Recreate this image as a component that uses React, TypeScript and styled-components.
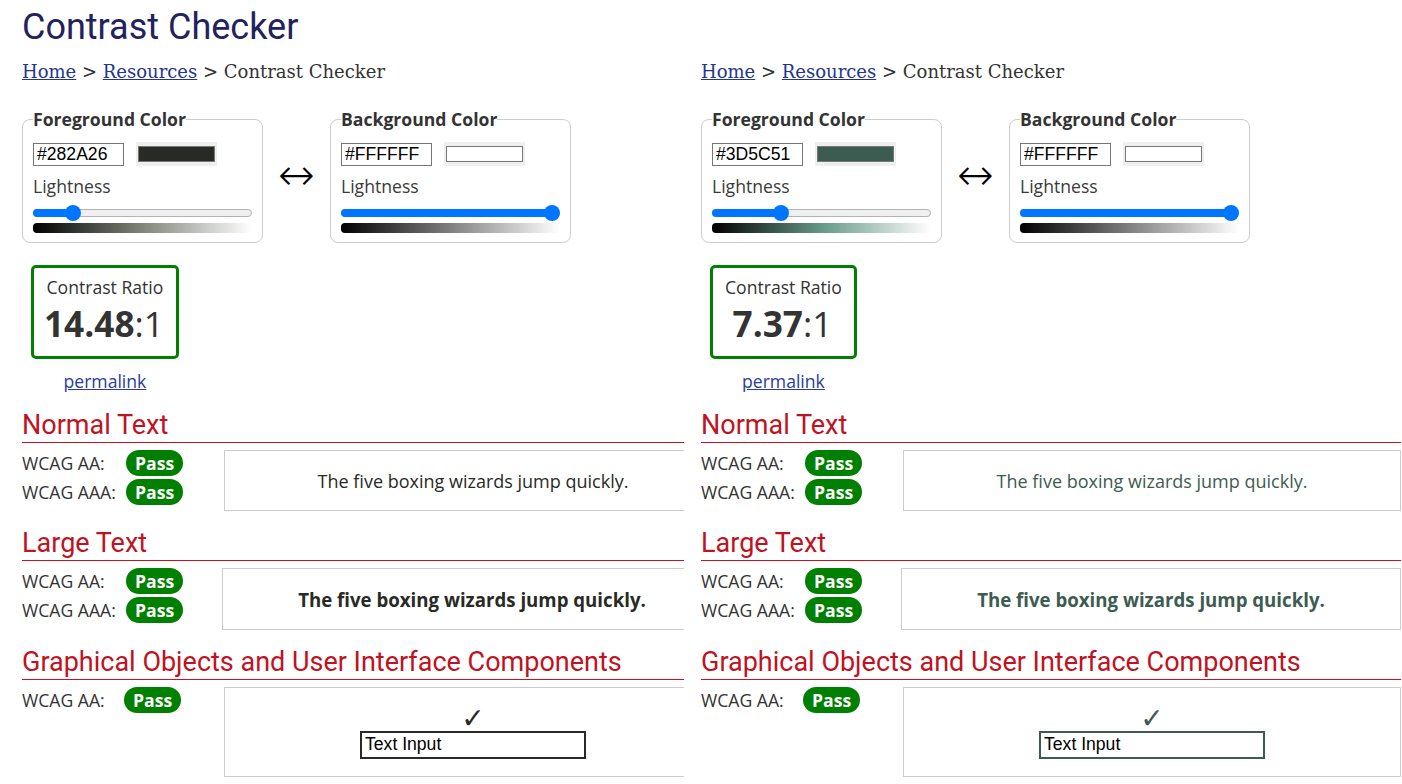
import React from "react";
import styled, { createGlobalStyle } from "styled-components";

const GlobalStyle = createGlobalStyle`
  html, body { margin: 0; padding: 0; background: #fff; }
  body {
    font-family: "Open Sans", "Noto Sans", sans-serif;
    font-size: 17.6px;
    color: #333;
  }
  * { box-sizing: border-box; }
`;

const Page = styled.div`
  display: flex;
  width: 1402px;
  height: 784px;
  overflow: hidden;
`;

const Panel = styled.section<{ $width?: number; $pad: number }>`
  flex: ${(p) => (p.$width ? `0 0 ${p.$width}px` : "1 1 auto")};
  overflow: hidden;
  padding-left: ${(p) => p.$pad}px;
`;

const Content = styled.div`
  width: 700px;
`;

const Title = styled.h1`
  margin: 7px 0 0;
  font-family: Roboto, "Noto Sans", sans-serif;
  font-weight: 400;
  font-size: 36px;
  line-height: 40px;
  color: #22225e;
`;

const TitleSpacer = styled.div`
  height: 47px;
`;

const Crumbs = styled.nav`
  margin-top: 13px;
  font-family: "DejaVu Serif", "Liberation Serif", serif;
  font-size: 18px;
  line-height: 24px;
  color: #333;
`;

const CrumbLink = styled.a`
  color: #24358f;
  text-decoration: underline;
`;

const ColorsRow = styled.div`
  display: flex;
  align-items: center;
  margin-top: 23px;
`;

const Fieldset = styled.fieldset`
  margin: 0;
  min-width: 0;
  width: 241px;
  border: 1px solid #ccc;
  border-radius: 8px;
  padding: 11px 10px 9px;
`;

const Legend = styled.legend`
  padding: 0;
  font-weight: 700;
  font-size: 17.6px;
  line-height: 24px;
  color: #333;
`;

const InputRow = styled.div`
  display: flex;
  align-items: center;
  gap: 12px;
`;

const HexInput = styled.input`
  width: 91px;
  height: 23px;
  margin: 0;
  border: 1px solid #767676;
  border-radius: 0;
  padding: 1px 3px;
  font-family: "Liberation Sans", Arial, sans-serif;
  font-size: 17.6px;
  color: #000;
  background: #fff;
`;

const Swatch = styled.span`
  display: flex;
  width: 81px;
  height: 24px;
  padding: 4px 2px;
  background: #efefef;
`;

const SwatchColor = styled.span<{ $color: string }>`
  flex: 1;
  border: 1px solid #777;
  background: ${(p) => p.$color};
`;

const FieldLabel = styled.div`
  margin-top: 8px;
  line-height: 24px;
  font-weight: 400;
  color: #3a3a3a;
`;

const Slider = styled.div`
  position: relative;
  display: flex;
  align-items: center;
  height: 16px;
  margin-top: 7px;
`;

const Track = styled.div`
  position: relative;
  width: 100%;
  height: 8px;
  border: 1px solid #b3b3b3;
  border-radius: 4px;
  background: #efefef;
`;

const Fill = styled.div`
  position: absolute;
  left: -1px;
  top: -1px;
  height: 8px;
  border-radius: 4px;
  background: #0075ff;
`;

const Thumb = styled.div`
  position: absolute;
  top: 0;
  width: 16px;
  height: 16px;
  border-radius: 50%;
  background: #0075ff;
`;

const GradientBar = styled.div<{ $mid: string }>`
  height: 10px;
  margin-top: 2px;
  border-radius: 4px 0 0 4px;
  background: linear-gradient(to right, #000, ${(p) => p.$mid}, #fff);
`;

const SwapArrow = styled.div`
  width: 67px;
  text-align: center;
  font-family: "DejaVu Sans ExtraLight", "DejaVu Sans", sans-serif;
  font-weight: 200;
  font-size: 44px;
  line-height: 34px;
  color: #000;
`;

const RatioWrap = styled.div`
  display: flex;
  flex-direction: column;
  align-items: center;
  width: max-content;
  margin: 22px 0 0 9px;
`;

const RatioBox = styled.div`
  border: 3px solid #008000;
  border-radius: 5px;
  padding: 7px 12px 9px;
  text-align: center;
`;

const RatioLabel = styled.div`
  line-height: 24px;
  color: #333;
`;

const RatioValue = styled.div`
  font-size: 35.2px;
  line-height: 48px;
  color: #333;
  margin-left: -2px;
  strong { font-weight: 700; }
`;

const Permalink = styled.a`
  margin-top: 10px;
  line-height: 24px;
  color: #2a3c9c;
  text-decoration: underline;
`;

const Section = styled.div`
  margin-top: 17px;
`;

const SectionHeading = styled.h2`
  margin: 0;
  padding-bottom: 1px;
  border-bottom: 1px solid #c8101e;
  font-family: Roboto, "Noto Sans", sans-serif;
  font-weight: 400;
  font-size: 27px;
  line-height: 31px;
  color: #c1121f;
`;

const SectionBody = styled.div`
  display: flex;
  align-items: flex-start;
  margin-top: 7px;
`;

const Results = styled.div<{ $width: number }>`
  flex: 0 0 ${(p) => p.$width}px;
  display: flex;
  flex-direction: column;
  gap: 3px;
`;

const ResultRow = styled.div`
  display: flex;
  align-items: center;
  height: 26px;
`;

const ResultLabel = styled.span<{ $width: number }>`
  width: ${(p) => p.$width}px;
  line-height: 26px;
  color: #333;
`;

const Badge = styled.span`
  display: inline-block;
  height: 26px;
  line-height: 26px;
  padding: 0 9px;
  border-radius: 13px;
  background: #008000;
  color: #fff;
  font-weight: 700;
`;

const SampleBox = styled.div<{ $color: string; $large?: boolean }>`
  flex: 1;
  border: 1px solid #ccc;
  padding: 17.5px 8px;
  text-align: center;
  color: ${(p) => p.$color};
  font-size: ${(p) => (p.$large ? "18.66px" : "18px")};
  font-weight: ${(p) => (p.$large ? 700 : 400)};
  line-height: ${(p) => (p.$large ? "25.4px" : "24px")};
`;

const Check = styled.div<{ $color: string }>`
  font-family: "DejaVu Sans", sans-serif;
  font-size: 28px;
  line-height: 25px;
  color: ${(p) => p.$color};
`;

const DemoInput = styled.input<{ $color: string }>`
  display: block;
  width: 226px;
  height: 28px;
  margin: 0 auto;
  padding: 0 3px;
  border: 2px solid ${(p) => p.$color};
  border-radius: 0;
  font-family: "Liberation Sans", Arial, sans-serif;
  font-size: 17.6px;
  color: #000;
  background: #fff;
`;

type Swatch = { legend: string; hex: string; lightness: number; mid: string };

type PanelData = {
  showTitle: boolean;
  pad: number;
  width?: number;
  fg: Swatch;
  bg: Swatch;
  ratio: string;
};

const TRACK_W = 219;

const ColorField: React.FC<{ s: Swatch }> = ({ s }) => {
  const thumbLeft = (TRACK_W - 16) * s.lightness;
  return (
    <Fieldset>
      <Legend>{s.legend}</Legend>
      <InputRow>
        <HexInput readOnly value={s.hex} />
        <Swatch>
          <SwatchColor $color={s.hex} />
        </Swatch>
      </InputRow>
      <FieldLabel>Lightness</FieldLabel>
      <Slider>
        <Track>
          <Fill style={{ width: thumbLeft + 8 }} />
        </Track>
        <Thumb style={{ left: thumbLeft }} />
      </Slider>
      <GradientBar $mid={s.mid} />
    </Fieldset>
  );
};

const Result: React.FC<{ label: string; labelWidth: number }> = ({ label, labelWidth }) => (
  <ResultRow>
    <ResultLabel $width={labelWidth}>{label}</ResultLabel>
    <Badge>Pass</Badge>
  </ResultRow>
);

const CheckerPanel: React.FC<{ d: PanelData }> = ({ d }) => {
  const fg = d.fg.hex;
  return (
    <Panel $pad={d.pad} $width={d.width}>
      <Content>
        {d.showTitle ? <Title>Contrast Checker</Title> : <TitleSpacer />}
        <Crumbs>
          <CrumbLink href="#">Home</CrumbLink> &gt; <CrumbLink href="#">Resources</CrumbLink> &gt; Contrast Checker
        </Crumbs>
        <ColorsRow>
          <ColorField s={d.fg} />
          <SwapArrow>↔</SwapArrow>
          <ColorField s={d.bg} />
        </ColorsRow>
        <RatioWrap>
          <RatioBox>
            <RatioLabel>Contrast Ratio</RatioLabel>
            <RatioValue>
              <strong>{d.ratio}</strong>:1
            </RatioValue>
          </RatioBox>
          <Permalink href="#">permalink</Permalink>
        </RatioWrap>

        <Section>
          <SectionHeading>Normal Text</SectionHeading>
          <SectionBody>
            <Results $width={202}>
              <Result label="WCAG AA:" labelWidth={104} />
              <Result label="WCAG AAA:" labelWidth={104} />
            </Results>
            <SampleBox $color={fg}>The five boxing wizards jump quickly.</SampleBox>
          </SectionBody>
        </Section>

        <Section>
          <SectionHeading>Large Text</SectionHeading>
          <SectionBody>
            <Results $width={200}>
              <Result label="WCAG AA:" labelWidth={104} />
              <Result label="WCAG AAA:" labelWidth={104} />
            </Results>
            <SampleBox $color={fg} $large>
              The five boxing wizards jump quickly.
            </SampleBox>
          </SectionBody>
        </Section>

        <Section>
          <SectionHeading>Graphical Objects and User Interface Components</SectionHeading>
          <SectionBody>
            <Results $width={202}>
              <Result label="WCAG AA:" labelWidth={102} />
            </Results>
            <SampleBox $color={fg}>
              <Check $color={fg}>✓</Check>
              <DemoInput $color={fg} readOnly value="Text Input" />
            </SampleBox>
          </SectionBody>
        </Section>
      </Content>
    </Panel>
  );
};

const white: Swatch = { legend: "Background Color", hex: "#FFFFFF", lightness: 1, mid: "hsl(0, 0%, 50%)" };

const panels: PanelData[] = [
  {
    showTitle: true,
    pad: 22,
    width: 684,
    fg: { legend: "Foreground Color", hex: "#282A26", lightness: 0.157, mid: "hsl(90, 5%, 50%)" },
    bg: white,
    ratio: "14.48",
  },
  {
    showTitle: false,
    pad: 17,
    fg: { legend: "Foreground Color", hex: "#3D5C51", lightness: 0.3, mid: "hsl(159, 20%, 50%)" },
    bg: white,
    ratio: "7.37",
  },
];

export default function App() {
  return (
    <>
      <GlobalStyle />
      <Page>
        {panels.map((d, i) => (
          <CheckerPanel key={i} d={d} />
        ))}
      </Page>
    </>
  );
}
